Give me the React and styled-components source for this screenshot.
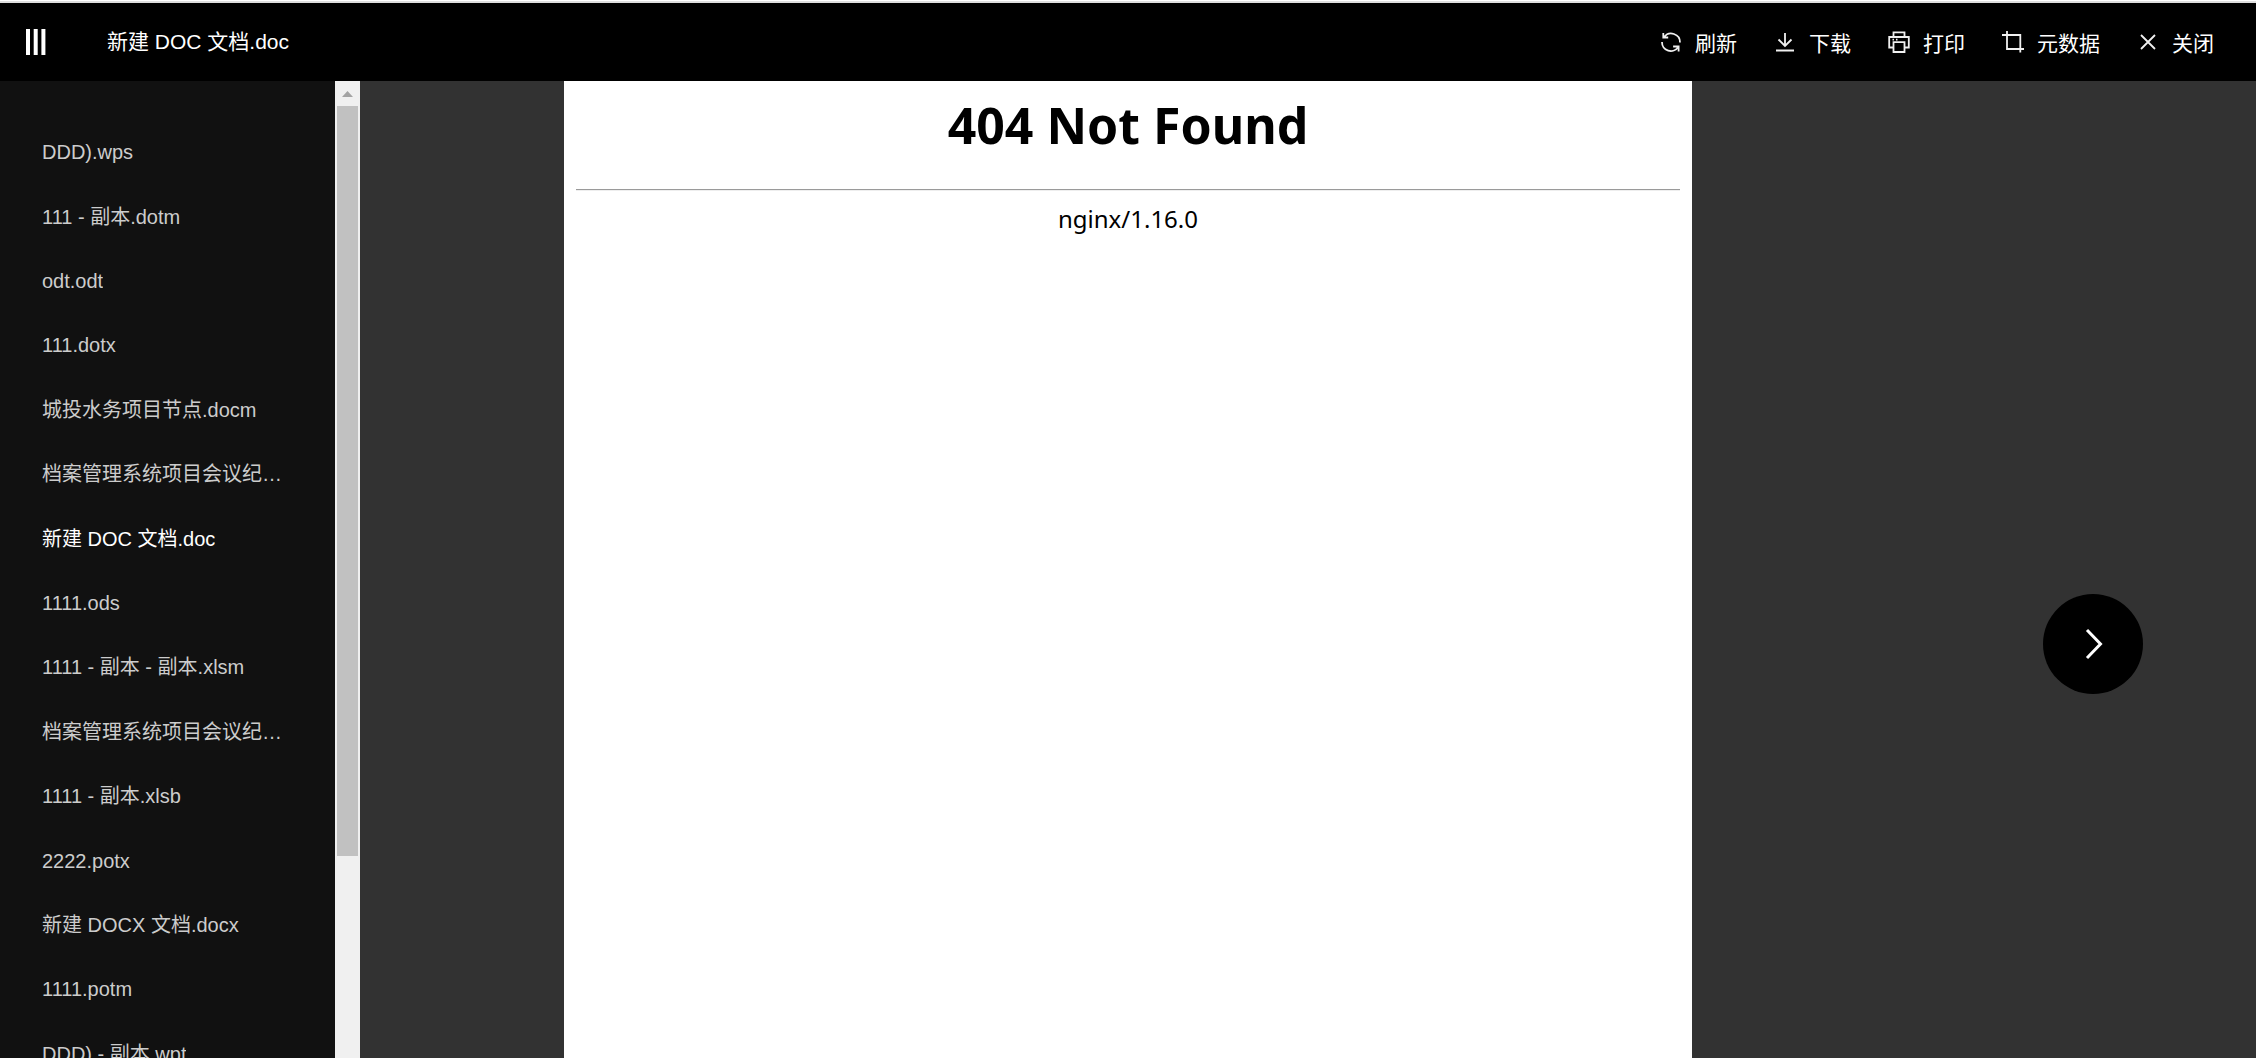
import React, { useState } from "react";

import styled, { createGlobalStyle } from "styled-components";

const files = [
  "DDD).wps",
  "111 - 副本.dotm",
  "odt.odt",
  "111.dotx",
  "城投水务项目节点.docm",
  "档案管理系统项目会议纪要.doc",
  "新建 DOC 文档.doc",
  "1111.ods",
  "1111 - 副本 - 副本.xlsm",
  "档案管理系统项目会议纪要.docx",
  "1111 - 副本.xlsb",
  "2222.potx",
  "新建 DOCX 文档.docx",
  "1111.potm",
  "DDD) - 副本.wpt",
];

const actions = [
  {
    label: "刷新",
    icon: (
      <>
        <path d="M3.3 2v4.5h4.9M4 6.3A8.8 8.8 0 0 1 20 11.5" />
        <path d="M18.6 20.5v-5h-5.5M2 11A8.8 8.8 0 0 0 18.2 16" />
      </>
    ),
  },
  {
    label: "下载",
    icon: <path d="M11 2v13M4.5 8.5L11 15l6.5-6.5M2 19.5h18" />,
  },
  {
    label: "打印",
    icon: (
      <>
        <path d="M5.5 6V1.3h11V6M5.5 16.5H1.2V6h19.6v10.5h-4.3" />
        <path d="M5.5 11.2h11V21h-11zM4.5 8.7H6M8 8.7h1.5" />
      </>
    ),
  },
  { label: "元数据", icon: <path d="M0 4h18.3v17.5M5 0v18h17" /> },
  { label: "关闭", icon: <path d="M4 4l14 14M18 4L4 18" /> },
];

const App = () => {
  const [current, setCurrent] = useState(6);

  return (
    <Viewer>
      <GlobalStyle />
      <Header>
        <MenuButton aria-label="菜单">
          <MenuIcon viewBox="0 0 20 26">
            <path d="M2 0v26M9.7 0v26M17.4 0v26" />
          </MenuIcon>
        </MenuButton>
        <Title>{files[current]}</Title>
        <Toolbar>
          {actions.map((action) => (
            <ToolButton key={action.label}>
              <ToolIcon viewBox="0 0 22 22">{action.icon}</ToolIcon>
              {action.label}
            </ToolButton>
          ))}
        </Toolbar>
      </Header>
      <Main>
        <Sidebar>
          <FileList>
            {files.map((file, index) => (
              <FileItem key={file}>
                <FileButton
                  $active={index === current}
                  onClick={() => setCurrent(index)}
                >
                  {file}
                </FileButton>
              </FileItem>
            ))}
          </FileList>
          <ScrollTrack>
            <ScrollArrow viewBox="0 0 25 25">
              <path d="M7 16l5.5-6 5.5 6z" />
            </ScrollArrow>
            <ScrollThumb />
          </ScrollTrack>
        </Sidebar>
        <Stage>
          <Page>
            <PageTitle>404 Not Found</PageTitle>
            <Divider />
            <PageText>nginx/1.16.0</PageText>
          </Page>
        </Stage>
        <NextButton
          aria-label="下一个"
          onClick={() => setCurrent((current + 1) % files.length)}
        >
          <NextIcon viewBox="0 0 32 32">
            <path d="M10 2l13.5 14L10 30" />
          </NextIcon>
        </NextButton>
      </Main>
    </Viewer>
  );
};

export default App;

const GlobalStyle = createGlobalStyle`
  * {
    box-sizing: border-box;
  }

  body {
    margin: 0;
    background: #323232;
    font-family: "Liberation Sans", "Noto Sans CJK SC", sans-serif;
  }

  button {
    border: 0;
    padding: 0;
    background: none;
    font: inherit;
    cursor: pointer;
  }
`;

const Viewer = styled.div`
  display: flex;
  flex-direction: column;
  height: 100vh;
  overflow: hidden;
  border-top: 1px solid #fff;
`;

const Header = styled.header`
  display: flex;
  align-items: center;
  flex: none;
  height: 80px;
  padding: 0 42px 0 26px;
  border-top: 2px solid #dedede;
  background: #000;
  color: #fff;
  font-size: 21px;
`;

const MenuButton = styled.button`
  display: flex;
`;

const MenuIcon = styled.svg`
  width: 20px;
  height: 26px;
  stroke: #fff;
  stroke-width: 4;
`;

const Title = styled.h1`
  margin: 0 0 0 61px;
  padding-bottom: 4px;
  font-size: 21px;
  font-weight: 400;
`;

const Toolbar = styled.div`
  display: flex;
  gap: 37px;
  margin-left: auto;
`;

const ToolButton = styled.button`
  display: flex;
  align-items: center;
  gap: 13px;
  color: #fff;
`;

const ToolIcon = styled.svg`
  width: 22px;
  height: 22px;
  overflow: visible;
  fill: none;
  stroke: #f0f0f0;
  stroke-width: 1.8;
`;

const Main = styled.main`
  position: relative;
  display: flex;
  flex: 1;
  min-height: 0;
`;

const Sidebar = styled.aside`
  display: flex;
  flex: none;
  width: 360px;
  overflow: hidden;
  background: #111;
`;

const FileList = styled.ul`
  display: grid;
  grid-auto-rows: 1fr;
  flex: 1;
  min-width: 0;
  height: 966px;
  margin: 39px 0 0;
  padding: 0 48px 0 42px;
  list-style: none;
`;

const FileItem = styled.li`
  display: flex;
  align-items: center;
  min-width: 0;
`;

const FileButton = styled.button`
  overflow: hidden;
  color: ${({ $active }) => ($active ? "#fff" : "#ccc")};
  font-size: 20px;
  line-height: 32px;
  text-align: left;
  text-overflow: ellipsis;
  white-space: nowrap;
`;

const ScrollTrack = styled.div`
  display: flex;
  flex-direction: column;
  align-items: center;
  width: 25px;
  background: #f0f0f0;
`;

const ScrollArrow = styled.svg`
  width: 25px;
  height: 25px;
  fill: #a3a3a3;
`;

const ScrollThumb = styled.div`
  width: 21px;
  height: 750px;
  background: #c1c1c1;
`;

const Stage = styled.section`
  display: flex;
  flex: 1;
  justify-content: center;
  padding-right: 360px;
`;

const Page = styled.article`
  width: 50vw;
  flex: none;
  padding: 10px 12px;
  background: #fff;
  color: #000;
  font-family: "Noto Sans", sans-serif;
  text-align: center;
`;

const PageTitle = styled.h2`
  margin: 0 0 30px;
  font-size: 50px;
  line-height: 68px;
`;

const Divider = styled.hr`
  margin: 0;
  border: 0;
  border-top: 1px solid #9a9a9a;
  border-bottom: 1px solid #eee;
`;

const PageText = styled.p`
  margin: 11px 0;
  font-size: 24px;
  line-height: 34px;
`;

const NextButton = styled.button`
  position: absolute;
  top: calc(50% + 74px);
  right: 5%;
  display: grid;
  place-items: center;
  width: 100px;
  height: 100px;
  transform: translateY(-50%);
  border-radius: 50%;
  background: #000;
`;

const NextIcon = styled.svg`
  width: 32px;
  height: 32px;
  fill: none;
  stroke: #fff;
  stroke-width: 3;
`;
